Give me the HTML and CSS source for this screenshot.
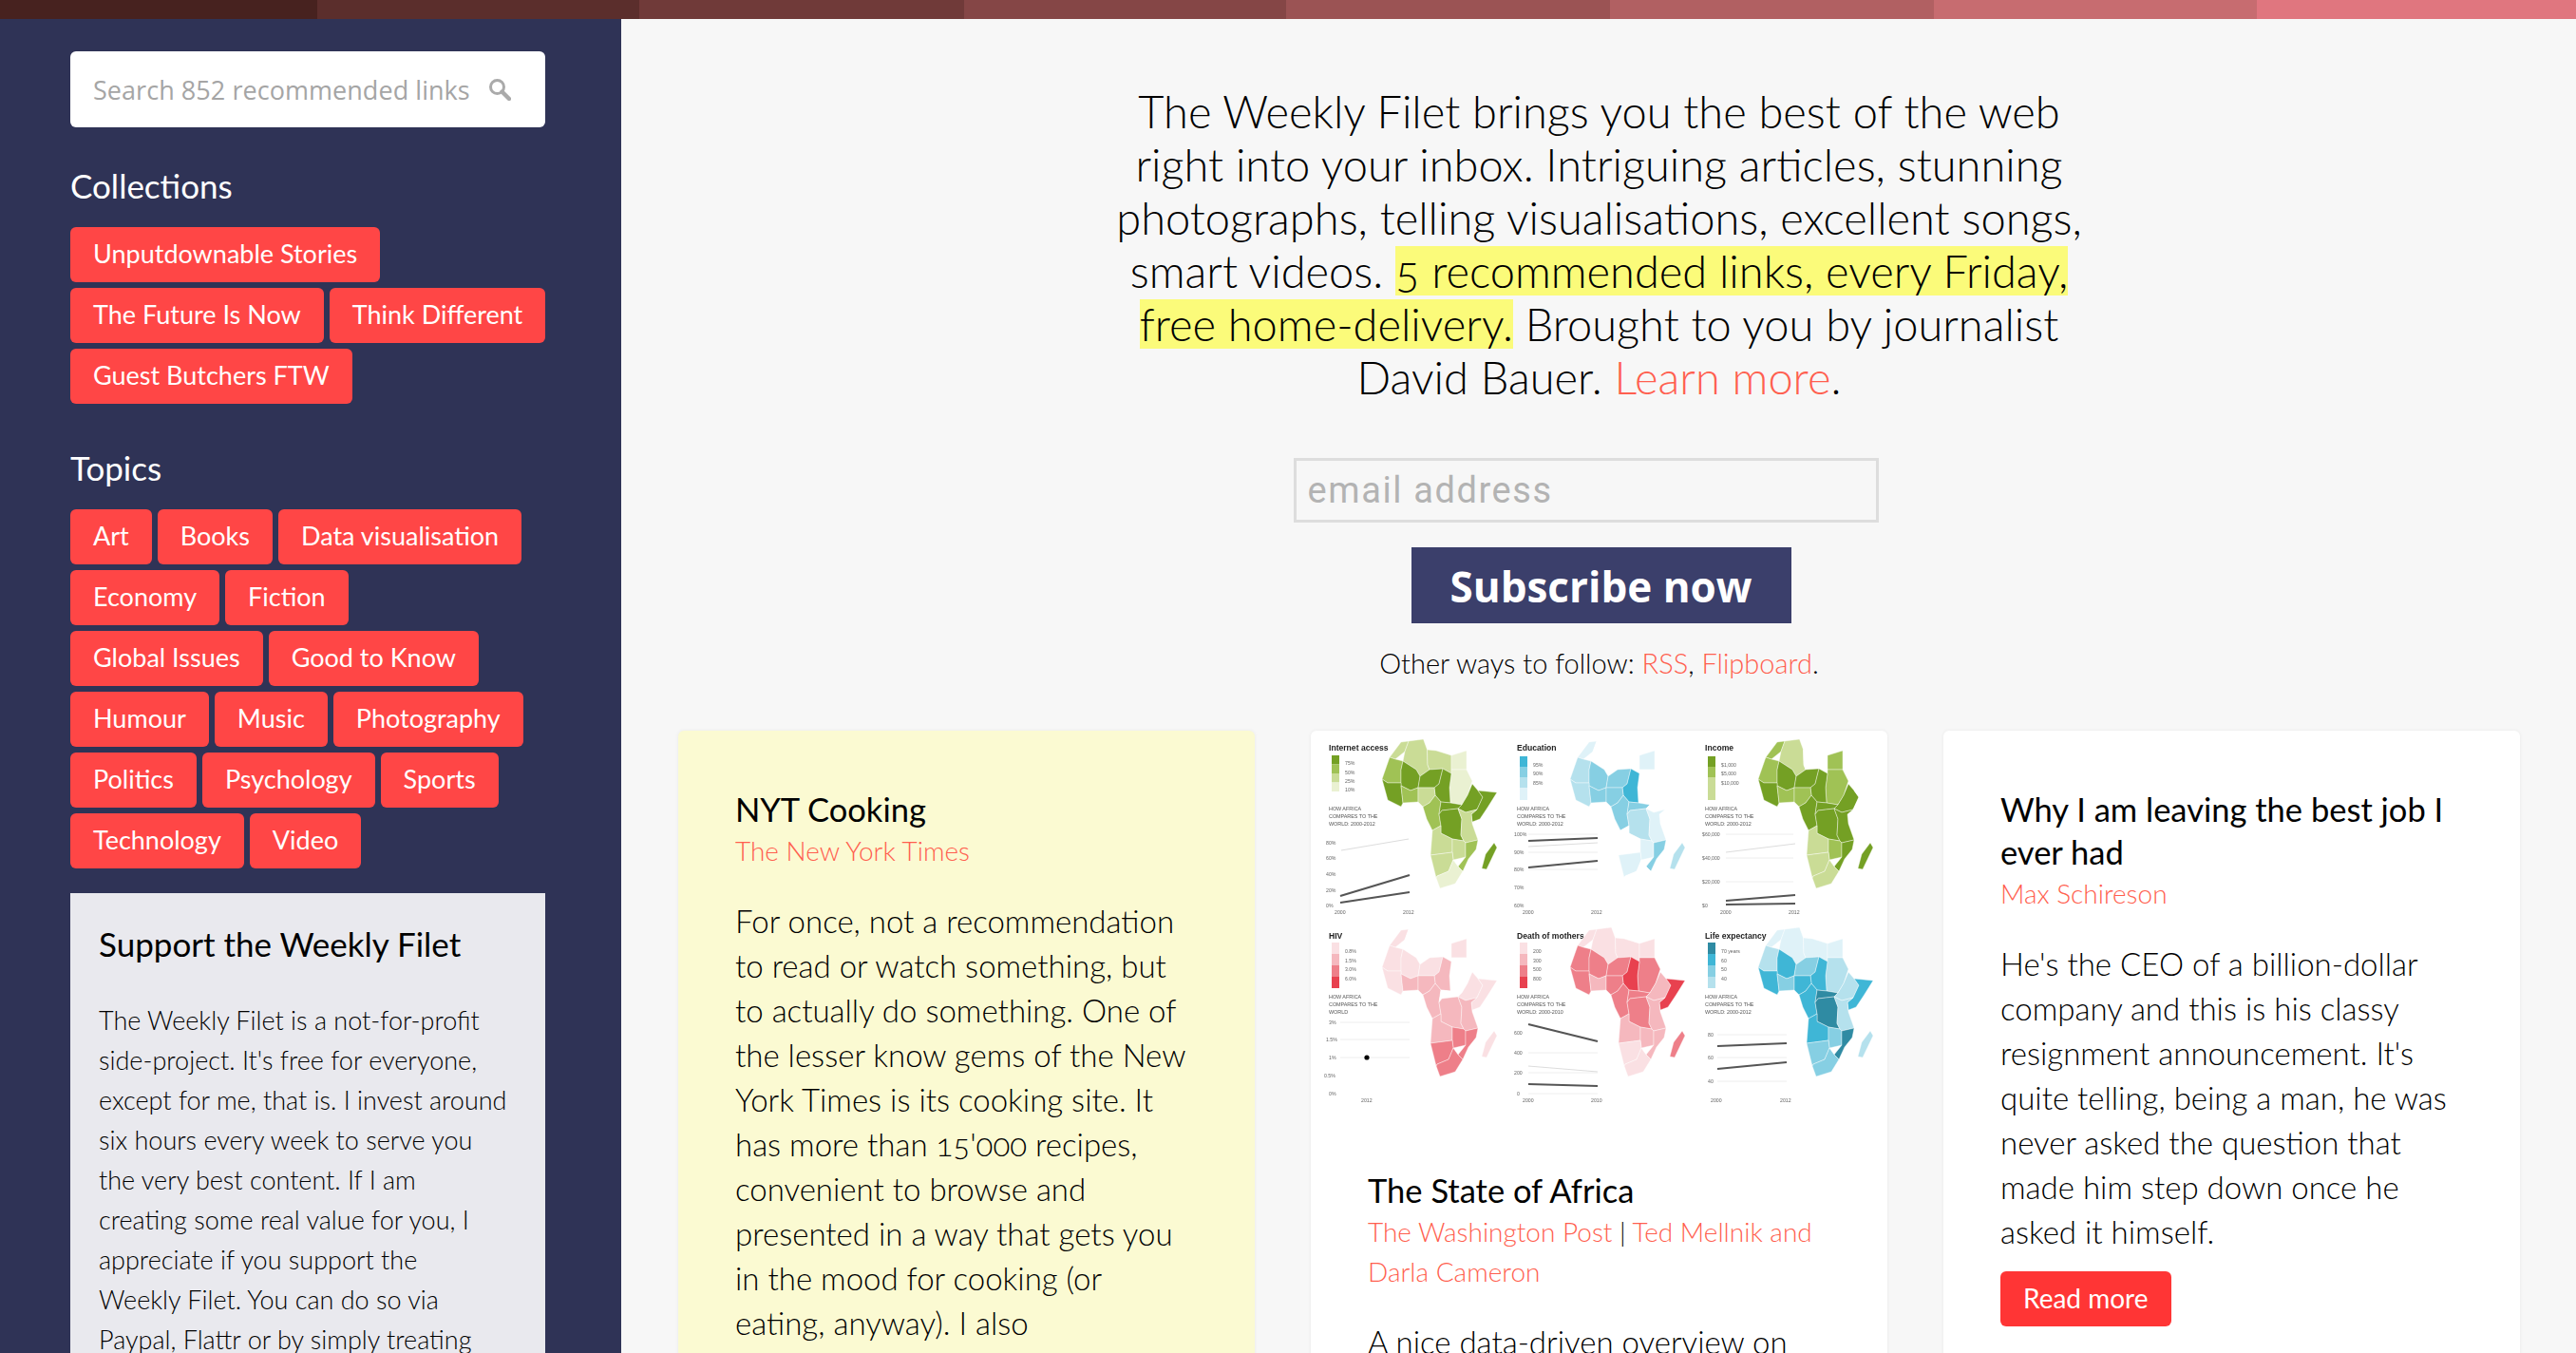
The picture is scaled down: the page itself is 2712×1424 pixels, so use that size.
FILE: index.html
```html
<!DOCTYPE html>
<html lang="en">
<head>
<meta charset="utf-8">
<title>The Weekly Filet</title>
<link rel="stylesheet" href="styles.css">
</head>
<body>
<div class="stripe"><i class="s1"></i><i class="s2"></i><i class="s3"></i><i class="s4"></i><i class="s5"></i><i class="s6"></i><i class="s7"></i><i class="s8"></i></div>
<div class="layout">
  <aside class="sidebar">
    <div class="search">
      <span class="search-text">Search 852 recommended links</span>
      <svg class="search-icon" viewBox="0 0 24 24"><circle cx="9.5" cy="9.5" r="7" fill="none" stroke="#aaa" stroke-width="3"/><path d="M14.5 14.5 22 22" stroke="#aaa" stroke-width="4.4" stroke-linecap="round"/></svg>
    </div>
    <h2 class="side-title first">Collections</h2>
    <div class="tags">
      <div class="tag-row"><a class="tag">Unputdownable Stories</a></div>
      <div class="tag-row"><a class="tag">The Future Is Now</a><a class="tag">Think Different</a></div>
      <div class="tag-row"><a class="tag">Guest Butchers FTW</a></div>
    </div>
    <h2 class="side-title second">Topics</h2>
    <div class="tags">
      <div class="tag-row"><a class="tag">Art</a><a class="tag">Books</a><a class="tag">Data visualisation</a></div>
      <div class="tag-row"><a class="tag">Economy</a><a class="tag">Fiction</a></div>
      <div class="tag-row"><a class="tag">Global Issues</a><a class="tag">Good to Know</a></div>
      <div class="tag-row"><a class="tag">Humour</a><a class="tag">Music</a><a class="tag">Photography</a></div>
      <div class="tag-row"><a class="tag">Politics</a><a class="tag">Psychology</a><a class="tag">Sports</a></div>
      <div class="tag-row"><a class="tag">Technology</a><a class="tag">Video</a></div>
    </div>
    <section class="support">
      <h3>Support the Weekly Filet</h3>
      <p>The Weekly Filet is a not-for-profit<br>side-project. It's free for everyone,<br>except for me, that is. I invest around<br>six hours every week to serve you<br>the very best content. If I am<br>creating some real value for you, I<br>appreciate if you support the<br>Weekly Filet. You can do so via<br>Paypal, Flattr or by simply treating</p>
    </section>
  </aside>
  <main class="main">
    <p class="intro">The Weekly Filet brings you the best of the web<br>right into your inbox. Intriguing articles, stunning<br>photographs, telling visualisations, excellent songs,<br>smart videos. <mark>5 recommended links, every Friday,</mark><br><mark>free home-delivery.</mark> Brought to you by journalist<br>David Bauer. <a class="link">Learn more</a>.</p>
    <div class="email">email address</div>
    <div class="subscribe">Subscribe now</div>
    <p class="other">Other ways to follow: <a class="link">RSS</a>, <a class="link">Flipboard</a>.</p>
    <div class="cards">
      <article class="card yellow">
        <div class="card-body">
          <h3>NYT Cooking</h3>
          <p class="source"><a class="link">The New York Times</a></p>
          <p class="text">For once, not a recommendation<br>to read or watch something, but<br>to actually do something. One of<br>the lesser know gems of the New<br>York Times is its cooking site. It<br>has more than 15'000 recipes,<br>convenient to browse and<br>presented in a way that gets you<br>in the mood for cooking (or<br>eating, anyway). I also</p>
        </div>
      </article>
      <article class="card">
        <svg class="africa" viewBox="0 0 607 412" role="img" aria-label="The State of Africa charts">
          <defs>
            <polygon id="mor" points="8,20 20,4 28,3 24,14 14,22"/>
            <polygon id="alg" points="28,3 43.5,1 47.5,12 48,28 50,33 40,40 36,33 22,24 24,14"/>
            <polygon id="lib" points="47.5,12 57,13 73,18 73,37 64,32 50,33 48,28"/>
            <polygon id="egy" points="73,18 89,13 89,33 73,33"/>
            <polygon id="sud" points="73,33 89,33 95,45 90,60 84,70 72,68 71,52 73,37"/>
            <polygon id="mau" points="0,43 8,20 14,22 22,24 20,33 20,47 6,47"/>
            <polygon id="mal" points="22,24 36,33 40,40 38,52 30,55 20,50 20,33"/>
            <polygon id="ngr" points="40,40 50,33 64,32 60,48 55,52 38,52"/>
            <polygon id="cha" points="64,32 73,37 71,52 72,68 62,67 56,60 55,52 60,48"/>
            <polygon id="wca" points="0,43 6,47 20,47 20,50 22,68 20,72 6,65"/>
            <polygon id="wcb" points="20,50 30,55 38,52 38,67 22,68"/>
            <polygon id="nga" points="38,52 55,52 56,60 50,68 43,72 38,67"/>
            <polygon id="cmr" points="43,72 50,68 56,60 62,67 60,80 62,92 53,97 47,85"/>
            <polygon id="car" points="62,67 72,68 84,70 80,74 63,76 60,80"/>
            <polygon id="drc" points="60,80 63,76 80,74 84,85 83,102 86,108 74,106 62,100 62,92"/>
            <polygon id="eth" points="84,70 90,60 95,48 101,55 106,62 100,75 88,78 80,74"/>
            <polygon id="som" points="101,55 121,57 111,73 103,85 95,88 94,80 100,75 106,62"/>
            <polygon id="ken" points="80,74 88,78 100,75 94,80 95,90 101,107 88,110 86,108 83,102 84,85"/>
            <polygon id="ang" points="53,97 62,92 62,100 74,106 74,120 51,123"/>
            <polygon id="zam" points="74,106 86,108 88,110 88,125 75,128 74,120"/>
            <polygon id="moz" points="88,110 101,107 99,117 91,127 85,140 80,135 88,125"/>
            <polygon id="nam" points="51,123 74,120 75,128 70,140 58,145 57,147"/>
            <polygon id="saf" points="58,145 70,140 75,128 80,135 85,140 77,153 61,158 57,147"/>
            <polygon id="mad" points="118,110 121,115 110,138 105,137 109,122"/>
          </defs>

          <g>
            <text class="t" x="19" y="21">Internet access</text>
            <rect class="g1" x="22" y="26" width="8" height="9.5"/><rect class="g2" x="22" y="35.5" width="8" height="9.5"/><rect class="g3" x="22" y="45" width="8" height="9.5"/><rect class="g4" x="22" y="54.5" width="8" height="9.5"/>
            <text class="l" x="36" y="36">75%</text><text class="l" x="36" y="46">50%</text><text class="l" x="36" y="55">25%</text><text class="l" x="36" y="64">10%</text>
            <text class="s" x="19" y="84">HOW AFRICA</text><text class="s" x="19" y="92">COMPARES TO THE</text><text class="s" x="19" y="100">WORLD: 2000-2012</text>
            <text class="l" x="16" y="120">80%</text><text class="l" x="16" y="136">60%</text><text class="l" x="16" y="153">40%</text><text class="l" x="16" y="170">20%</text><text class="l" x="16" y="186">0%</text>
            <line class="pale" x1="32" y1="126" x2="103" y2="114"/><line class="dark" x1="31" y1="174" x2="104" y2="152"/><line class="dark" x1="31" y1="181" x2="104" y2="170"/>
            <text class="l" x="25" y="193">2000</text><text class="l" x="97" y="193">2012</text>
            <g transform="translate(75,8)">
              <use href="#mor" class="g3"/><use href="#alg" class="g3"/><use href="#lib" class="g3"/><use href="#egy" class="g4"/><use href="#sud" class="g4"/><use href="#mau" class="g2"/><use href="#mal" class="g1"/><use href="#ngr" class="g1"/><use href="#cha" class="g1"/><use href="#wca" class="g1"/><use href="#wcb" class="g2"/><use href="#nga" class="g3"/><use href="#cmr" class="g2"/><use href="#car" class="g1"/><use href="#drc" class="g1"/><use href="#eth" class="g1"/><use href="#som" class="g1"/><use href="#ken" class="g3"/><use href="#ang" class="g3"/><use href="#zam" class="g3"/><use href="#moz" class="g2"/><use href="#nam" class="g3"/><use href="#saf" class="g4"/><use href="#mad" class="g1"/>
            </g>
          </g>

          <g transform="translate(198,0)">
            <text class="t" x="19" y="21">Education</text>
            <rect class="b1" x="22" y="27" width="8" height="11"/><rect class="b2" x="22" y="38" width="8" height="11"/><rect class="b3" x="22" y="49" width="8" height="11"/><rect class="b4" x="22" y="60" width="8" height="13"/>
            <text class="l" x="36" y="38">95%</text><text class="l" x="36" y="47">90%</text><text class="l" x="36" y="57">85%</text>
            <text class="s" x="19" y="84">HOW AFRICA</text><text class="s" x="19" y="92">COMPARES TO THE</text><text class="s" x="19" y="100">WORLD: 2000-2012</text>
            <text class="l" x="16" y="111">100%</text><text class="l" x="16" y="130">90%</text><text class="l" x="16" y="148">80%</text><text class="l" x="16" y="167">70%</text><text class="l" x="16" y="186">60%</text>
            <line class="grid" x1="31" y1="109" x2="104" y2="109"/><line class="grid" x1="31" y1="128" x2="104" y2="128"/><line class="grid" x1="31" y1="146" x2="104" y2="146"/>
            <line class="dark" x1="31" y1="116" x2="104" y2="113"/><line class="pale" x1="31" y1="122" x2="104" y2="118"/><line class="dark" x1="31" y1="144" x2="104" y2="137"/>
            <text class="l" x="25" y="193">2000</text><text class="l" x="97" y="193">2012</text>
            <g transform="translate(75,8)">
              <use href="#mor" class="b4"/><use href="#alg" class="w"/><use href="#lib" class="w"/><use href="#egy" class="b4"/><use href="#sud" class="w"/><use href="#mau" class="b3"/><use href="#mal" class="b2"/><use href="#ngr" class="b2"/><use href="#cha" class="b1"/><use href="#wca" class="b3"/><use href="#wcb" class="b2"/><use href="#nga" class="b2"/><use href="#cmr" class="b2"/><use href="#car" class="b2"/><use href="#drc" class="b3"/><use href="#eth" class="w"/><use href="#som" class="w"/><use href="#ken" class="b4"/><use href="#ang" class="w"/><use href="#zam" class="b4"/><use href="#moz" class="b2"/><use href="#nam" class="b4"/><use href="#saf" class="w"/><use href="#mad" class="b3"/>
            </g>
          </g>

          <g transform="translate(396,0)">
            <text class="t" x="19" y="21">Income</text>
            <rect class="g1" x="22" y="27" width="8" height="11"/><rect class="g2" x="22" y="38" width="8" height="11"/><rect class="g3" x="22" y="49" width="8" height="11"/><rect class="g3" x="22" y="60" width="8" height="13"/>
            <text class="l" x="36" y="38">$1,000</text><text class="l" x="36" y="47">$5,000</text><text class="l" x="36" y="57">$10,000</text>
            <text class="s" x="19" y="84">HOW AFRICA</text><text class="s" x="19" y="92">COMPARES TO THE</text><text class="s" x="19" y="100">WORLD: 2000-2012</text>
            <text class="l" x="16" y="111">$60,000</text><text class="l" x="16" y="136">$40,000</text><text class="l" x="16" y="161">$20,000</text><text class="l" x="16" y="186">$0</text>
            <line class="grid" x1="41" y1="109" x2="112" y2="109"/><line class="grid" x1="41" y1="134" x2="112" y2="134"/><line class="grid" x1="41" y1="159" x2="112" y2="159"/>
            <line class="pale" x1="41" y1="128" x2="114" y2="119"/><line class="dark" x1="41" y1="179" x2="114" y2="173"/><line class="dark" x1="41" y1="183" x2="114" y2="182"/>
            <text class="l" x="35" y="193">2000</text><text class="l" x="107" y="193">2012</text>
            <g transform="translate(75,8)">
              <use href="#mor" class="g2"/><use href="#alg" class="g3"/><use href="#lib" class="w"/><use href="#egy" class="g2"/><use href="#sud" class="g2"/><use href="#mau" class="g2"/><use href="#mal" class="g1"/><use href="#ngr" class="g1"/><use href="#cha" class="g1"/><use href="#wca" class="g1"/><use href="#wcb" class="g2"/><use href="#nga" class="g2"/><use href="#cmr" class="g1"/><use href="#car" class="g1"/><use href="#drc" class="g1"/><use href="#eth" class="g1"/><use href="#som" class="w"/><use href="#ken" class="g1"/><use href="#ang" class="g3"/><use href="#zam" class="g2"/><use href="#moz" class="g1"/><use href="#nam" class="g3"/><use href="#saf" class="g3"/><use href="#mad" class="g1"/>
            </g>
          </g>

          <g transform="translate(0,198)">
            <text class="t" x="19" y="21">HIV</text>
            <rect class="p4" x="22" y="25" width="8" height="12"/><rect class="p3" x="22" y="37" width="8" height="12"/><rect class="p2" x="22" y="49" width="8" height="12"/><rect class="p1" x="22" y="61" width="8" height="12"/>
            <text class="l" x="36" y="36">0.8%</text><text class="l" x="36" y="46">1.5%</text><text class="l" x="36" y="55">3.0%</text><text class="l" x="36" y="65">6.0%</text>
            <text class="s" x="19" y="84">HOW AFRICA</text><text class="s" x="19" y="92">COMPARES TO THE</text><text class="s" x="19" y="100">WORLD</text>
            <text class="l" x="19" y="111">3%</text><text class="l" x="16" y="129">1.5%</text><text class="l" x="19" y="148">1%</text><text class="l" x="14" y="167">0.5%</text><text class="l" x="19" y="186">0%</text>
            <line class="grid" x1="31" y1="109" x2="104" y2="109"/><line class="grid" x1="31" y1="127" x2="104" y2="127"/><line class="grid" x1="31" y1="146" x2="104" y2="146"/>
            <circle cx="59" cy="146" r="2.6" fill="#000"/>
            <text class="l" x="53" y="193">2012</text>
            <g transform="translate(75,8)">
              <use href="#mor" class="p4"/><use href="#alg" class="w"/><use href="#lib" class="w"/><use href="#egy" class="p4"/><use href="#sud" class="w"/><use href="#mau" class="p4"/><use href="#mal" class="p4"/><use href="#ngr" class="p4"/><use href="#cha" class="p3"/><use href="#wca" class="p4"/><use href="#wcb" class="p3"/><use href="#nga" class="p3"/><use href="#cmr" class="p3"/><use href="#car" class="w"/><use href="#drc" class="p3"/><use href="#eth" class="p4"/><use href="#som" class="p4"/><use href="#ken" class="p3"/><use href="#ang" class="p3"/><use href="#zam" class="p2"/><use href="#moz" class="p2"/><use href="#nam" class="p2"/><use href="#saf" class="p2"/><use href="#mad" class="p4"/>
            </g>
          </g>

          <g transform="translate(198,198)">
            <text class="t" x="19" y="21">Death of mothers</text>
            <rect class="p4" x="22" y="25" width="8" height="12"/><rect class="p3" x="22" y="37" width="8" height="12"/><rect class="p2" x="22" y="49" width="8" height="12"/><rect class="p1" x="22" y="61" width="8" height="12"/>
            <text class="l" x="36" y="36">200</text><text class="l" x="36" y="46">300</text><text class="l" x="36" y="55">500</text><text class="l" x="36" y="65">800</text>
            <text class="s" x="19" y="84">HOW AFRICA</text><text class="s" x="19" y="92">COMPARES TO THE</text><text class="s" x="19" y="100">WORLD: 2000-2010</text>
            <text class="l" x="16" y="122">600</text><text class="l" x="16" y="143">400</text><text class="l" x="16" y="164">200</text><text class="l" x="19" y="186">0</text>
            <line class="grid" x1="31" y1="141" x2="104" y2="141"/><line class="grid" x1="31" y1="162" x2="104" y2="162"/><line class="grid" x1="31" y1="184" x2="104" y2="184"/>
            <line class="dark" x1="31" y1="111" x2="104" y2="129"/><line class="pale" x1="31" y1="155" x2="104" y2="161"/><line class="dark" x1="31" y1="174" x2="104" y2="176"/>
            <text class="l" x="25" y="193">2000</text><text class="l" x="97" y="193">2010</text>
            <g transform="translate(75,8)">
              <use href="#mor" class="p4"/><use href="#alg" class="p4"/><use href="#lib" class="p4"/><use href="#egy" class="p4"/><use href="#sud" class="p2"/><use href="#mau" class="p2"/><use href="#mal" class="p2"/><use href="#ngr" class="p2"/><use href="#cha" class="p1"/><use href="#wca" class="p2"/><use href="#wcb" class="p3"/><use href="#nga" class="p2"/><use href="#cmr" class="p2"/><use href="#car" class="p2"/><use href="#drc" class="p2"/><use href="#eth" class="p3"/><use href="#som" class="p1"/><use href="#ken" class="p3"/><use href="#ang" class="p3"/><use href="#zam" class="p3"/><use href="#moz" class="p3"/><use href="#nam" class="p4"/><use href="#saf" class="p4"/><use href="#mad" class="p2"/>
            </g>
          </g>

          <g transform="translate(396,198)">
            <text class="t" x="19" y="21">Life expectancy</text>
            <rect class="d" x="22" y="25" width="8" height="12"/><rect class="b1" x="22" y="37" width="8" height="12"/><rect class="b2" x="22" y="49" width="8" height="12"/><rect class="b3" x="22" y="61" width="8" height="12"/>
            <text class="l" x="36" y="36">70 years</text><text class="l" x="36" y="46">60</text><text class="l" x="36" y="55">50</text><text class="l" x="36" y="65">40</text>
            <text class="s" x="19" y="84">HOW AFRICA</text><text class="s" x="19" y="92">COMPARES TO THE</text><text class="s" x="19" y="100">WORLD: 2000-2012</text>
            <text class="l" x="22" y="124">80</text><text class="l" x="22" y="148">60</text><text class="l" x="22" y="173">40</text>
            <line class="grid" x1="32" y1="122" x2="105" y2="122"/><line class="grid" x1="32" y1="146" x2="105" y2="146"/><line class="grid" x1="32" y1="171" x2="105" y2="171"/>
            <line class="dark" x1="32" y1="134" x2="105" y2="131"/><line class="dark" x1="32" y1="158" x2="105" y2="151"/>
            <text class="l" x="25" y="193">2000</text><text class="l" x="98" y="193">2012</text>
            <g transform="translate(75,8)">
              <use href="#mor" class="b4"/><use href="#alg" class="b4"/><use href="#lib" class="b4"/><use href="#egy" class="b4"/><use href="#sud" class="b3"/><use href="#mau" class="b3"/><use href="#mal" class="b1"/><use href="#ngr" class="b2"/><use href="#cha" class="b1"/><use href="#wca" class="b1"/><use href="#wcb" class="b2"/><use href="#nga" class="b1"/><use href="#cmr" class="b1"/><use href="#car" class="d"/><use href="#drc" class="d"/><use href="#eth" class="b3"/><use href="#som" class="b1"/><use href="#ken" class="b3"/><use href="#ang" class="b1"/><use href="#zam" class="b2"/><use href="#moz" class="d"/><use href="#nam" class="b2"/><use href="#saf" class="b2"/><use href="#mad" class="b3"/>
            </g>
          </g>
        </svg>
        <div class="card-body after-image">
          <h3>The State of Africa</h3>
          <p class="source"><a class="link">The Washington Post</a> | <a class="link">Ted Mellnik and<br>Darla Cameron</a></p>
          <p class="text">A nice data-driven overview on</p>
        </div>
      </article>
      <article class="card">
        <div class="card-body">
          <h3>Why I am leaving the best job I<br>ever had</h3>
          <p class="source"><a class="link">Max Schireson</a></p>
          <p class="text">He's the CEO of a billion-dollar<br>company and this is his classy<br>resignment announcement. It's<br>quite telling, being a man, he was<br>never asked the question that<br>made him step down once he<br>asked it himself.</p>
          <a class="read">Read more</a>
        </div>
      </article>
    </div>
  </main>
</div>
</body>
</html>
```
FILE: styles.css
```css
html, body { margin: 0; height: 1424px; overflow: hidden; }
body { background: #f7f7f7; color: #000; font-family: Lato, "Open Sans", sans-serif; font-weight: 300; font-variant-numeric: oldstyle-nums; }
.stripe { display: flex; height: 20px; }
.stripe i { flex: none; }
.s1 { width: 334px; background: #47221f; } .s2 { width: 339px; background: #5b2e2c; } .s3 { width: 342px; background: #703a39; } .s4 { width: 339px; background: #854646; }
.s5 { width: 341px; background: #9b5354; } .s6 { width: 341px; background: #b16062; } .s7 { width: 340px; background: #c76c70; } .s8 { width: 336px; background: #e0767f; }
.layout { display: flex; height: 1404px; overflow: hidden; }

.sidebar { width: 654px; flex: none; box-sizing: border-box; padding: 34px 80px 0 74px; background: #2f3356; height: 1500px; }
.search { display: flex; align-items: center; justify-content: space-between; box-sizing: border-box; height: 80px; padding: 0 36px 0 24px; background: #fff; border-radius: 6px; }
.search-text { font-family: "Open Sans", sans-serif; font-weight: 400; font-size: 27px; letter-spacing: .05px; font-variant-numeric: lining-nums; color: #a5a5a5; white-space: nowrap; }
.search-icon { width: 24px; height: 24px; flex: none; }
.side-title { margin: 0; font-size: 35px; line-height: 44px; font-weight: 400; color: #fff; }
.side-title.first { margin-top: 39px; margin-bottom: 22px; }
.side-title.second { margin-top: 45px; margin-bottom: 22px; }
.tags { display: flex; flex-direction: column; gap: 6px; }
.tag-row { display: flex; gap: 6px; }
.tag { box-sizing: border-box; height: 58px; padding: 0 24px; line-height: 56px; background: #ff4646; color: #fff; border-radius: 6px; font-size: 27px; font-weight: 400; white-space: nowrap; }
.support { margin-top: 26px; padding: 30px; height: 700px; box-sizing: border-box; background: #e9e9ee; }
.support h3 { margin: 0; font-size: 35px; line-height: 46px; font-weight: 400; white-space: nowrap; }
.support p { margin: 37px 0 0; font-size: 27px; line-height: 42px; white-space: nowrap; }

.main { flex: 1; min-width: 0; box-sizing: border-box; padding: 69px 59px 0 60px; display: flex; flex-direction: column; align-items: center; }
.intro { margin: 0; font-size: 47px; line-height: 56px; text-align: center; white-space: nowrap; }
mark { color: inherit; background: linear-gradient(transparent 2px, #fbfb7a 2px, #fbfb7a calc(100% - 2px), transparent calc(100% - 2px)); }
.link { color: #ff5f4f; }
.email { box-sizing: border-box; width: 616px; height: 68px; margin: 57px 28px 0 0; padding: 0 12px; border: 3px solid #ddd; line-height: 62px; font-family: Roboto, sans-serif; font-weight: 400; font-size: 38px; letter-spacing: 1.6px; color: #b3b3b3; white-space: nowrap; }
.subscribe { box-sizing: border-box; width: 400px; height: 80px; margin: 26px 0 0 4px; background: #3b3f6b; color: #fff; text-align: center; font-family: "Open Sans", sans-serif; font-weight: 700; font-size: 44px; line-height: 82px; white-space: nowrap; }
.other { margin: 21px 0 0; font-size: 29px; line-height: 42px; white-space: nowrap; }

.cards { align-self: stretch; display: grid; grid-template-columns: repeat(3, 607px); gap: 59px; margin-top: 50px; min-height: 800px; }
.card { background: #fff; border-radius: 6px; box-shadow: 0 0 4px rgba(0,0,0,.06); overflow: hidden; }
.card.yellow { background: #fbfad2; }
.card-body { padding: 60px 60px 0 60px; }
.card-body.after-image { padding: 49px 60px 0 60px; }
.card h3 { margin: 0; font-size: 34.5px; line-height: 45px; font-weight: 400; white-space: nowrap; }
.source { margin: 0; font-size: 28px; line-height: 42px; white-space: nowrap; }
.text { margin: 30px 0 0; font-size: 33px; line-height: 47px; white-space: nowrap; }
.read { display: inline-block; height: 58px; margin-top: 18px; padding: 0 24px; line-height: 56px; background: #ff3535; color: #fff; border-radius: 6px; font-size: 28px; font-weight: 400; }

.africa { display: block; width: 607px; height: 412px; filter: blur(.6px); }
.africa polygon { stroke: #fff; stroke-width: .4; }
.africa text { font-family: "Liberation Sans", sans-serif; fill: #555; }
.africa .t { font-size: 8.6px; font-weight: 700; fill: #222; }
.africa .l { font-size: 5.2px; fill: #666; }
.africa .s { font-size: 5.4px; fill: #555; }
.africa .dark { stroke: #555; stroke-width: 2.2; }
.africa .pale { stroke: #ddd; stroke-width: 1.2; }
.africa .grid { stroke: #eee; stroke-width: 1; }
.g1 { fill: #74a024; } .g2 { fill: #a0c255; } .g3 { fill: #cadc96; } .g4 { fill: #eaf1d2; }
.b1 { fill: #3fb6d6; } .b2 { fill: #86cfe3; } .b3 { fill: #b5e1ed; } .b4 { fill: #dff2f8; }
.p1 { fill: #e8414f; } .p2 { fill: #ee7f89; } .p3 { fill: #f5b8be; } .p4 { fill: #fae0e3; }
.d { fill: #2f8ba3; } .w { fill: #fff; }
```
